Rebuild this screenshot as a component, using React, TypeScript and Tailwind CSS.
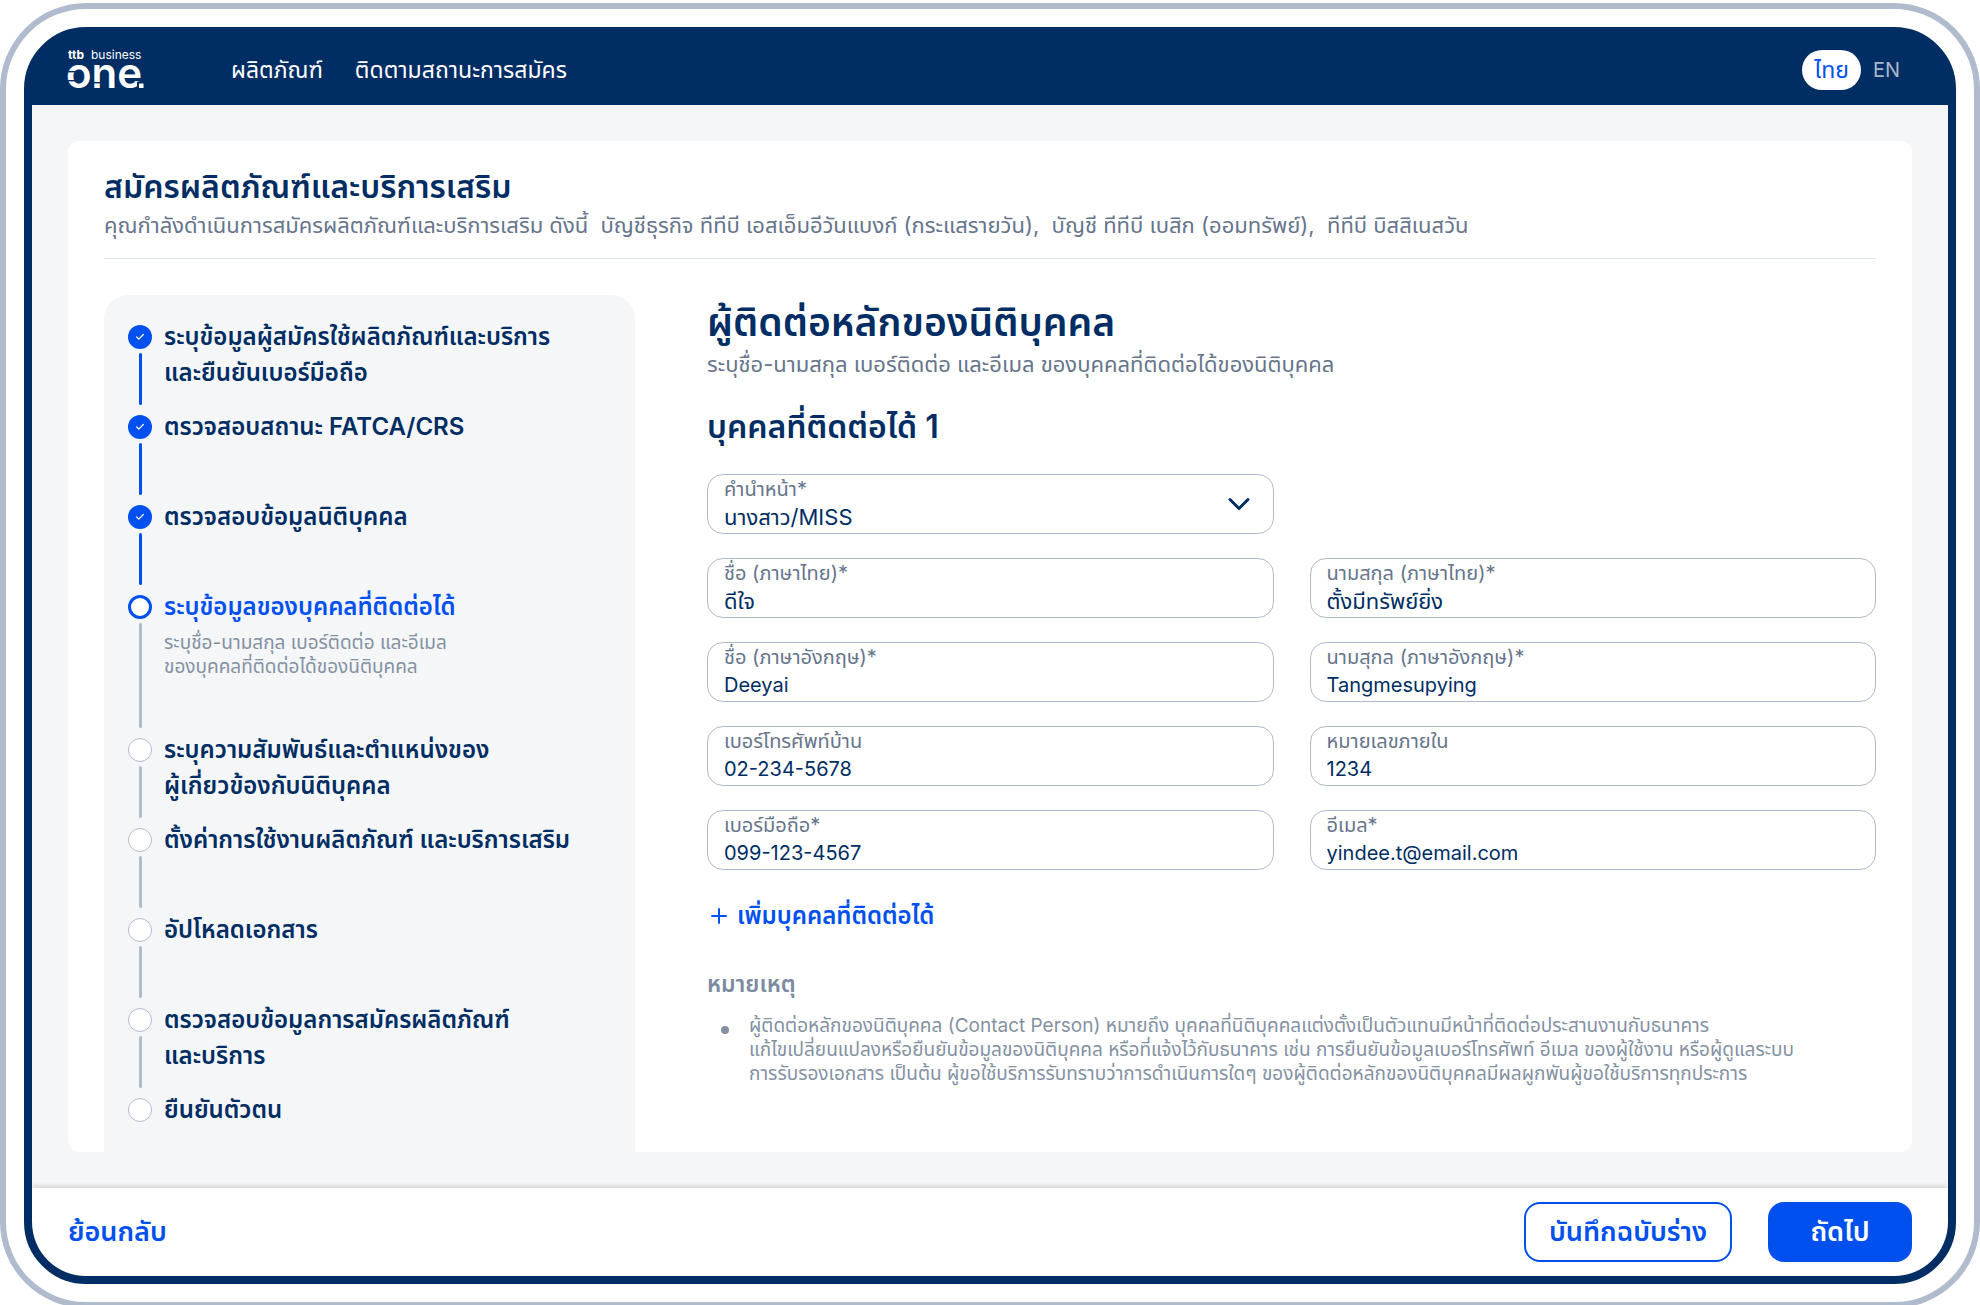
import { Check, ChevronDown, Plus } from 'lucide-react'

type StepState = 'done' | 'current' | 'todo'

type Step = {
  lines: string[]
  state: StepState
  desc?: string[]
}

const steps: Step[] = [
  { lines: ['ระบุข้อมูลผู้สมัครใช้ผลิตภัณฑ์และบริการ', 'และยืนยันเบอร์มือถือ'], state: 'done' },
  { lines: ['ตรวจสอบสถานะ FATCA/CRS'], state: 'done' },
  { lines: ['ตรวจสอบข้อมูลนิติบุคคล'], state: 'done' },
  {
    lines: ['ระบุข้อมูลของบุคคลที่ติดต่อได้'],
    state: 'current',
    desc: ['ระบุชื่อ-นามสกุล เบอร์ติดต่อ และอีเมล', 'ของบุคคลที่ติดต่อได้ของนิติบุคคล'],
  },
  { lines: ['ระบุความสัมพันธ์และตำแหน่งของ', 'ผู้เกี่ยวข้องกับนิติบุคคล'], state: 'todo' },
  { lines: ['ตั้งค่าการใช้งานผลิตภัณฑ์ และบริการเสริม'], state: 'todo' },
  { lines: ['อัปโหลดเอกสาร'], state: 'todo' },
  { lines: ['ตรวจสอบข้อมูลการสมัครผลิตภัณฑ์', 'และบริการ'], state: 'todo' },
  { lines: ['ยืนยันตัวตน'], state: 'todo' },
]

type FieldProps = { id: string; label: string; value: string; thai?: boolean }

const fields: FieldProps[] = [
  { id: 'firstNameTh', label: 'ชื่อ (ภาษาไทย)*', value: 'ดีใจ', thai: true },
  { id: 'lastNameTh', label: 'นามสกุล (ภาษาไทย)*', value: 'ตั้งมีทรัพย์ยิ่ง', thai: true },
  { id: 'firstNameEn', label: 'ชื่อ (ภาษาอังกฤษ)*', value: 'Deeyai' },
  { id: 'lastNameEn', label: 'นามสุกล (ภาษาอังกฤษ)*', value: 'Tangmesupying' },
  { id: 'homePhone', label: 'เบอร์โทรศัพท์บ้าน', value: '02-234-5678' },
  { id: 'ext', label: 'หมายเลขภายใน', value: '1234' },
  { id: 'mobile', label: 'เบอร์มือถือ*', value: '099-123-4567' },
  { id: 'email', label: 'อีเมล*', value: 'yindee.t@email.com' },
]

const notes = [
  'ผู้ติดต่อหลักของนิติบุคคล (Contact Person) หมายถึง บุคคลที่นิติบุคคลแต่งตั้งเป็นตัวแทนมีหน้าที่ติดต่อประสานงานกับธนาคาร',
  'แก้ไขเปลี่ยนแปลงหรือยืนยันข้อมูลของนิติบุคคล หรือที่แจ้งไว้กับธนาคาร เช่น การยืนยันข้อมูลเบอร์โทรศัพท์ อีเมล ของผู้ใช้งาน หรือผู้ดูแลระบบ',
  'การรับรองเอกสาร เป็นต้น ผู้ขอใช้บริการรับทราบว่าการดำเนินการใดๆ ของผู้ติดต่อหลักของนิติบุคคลมีผลผูกพันผู้ขอใช้บริการทุกประการ',
]

function Logo() {
  return (
    <svg width="80" height="42" viewBox="0 0 80 42" className="shrink-0 overflow-visible" role="img" aria-label="ttb business one">
      <g fill="#fff" fontFamily="Inter, sans-serif">
        <text x="0" y="10" fontSize="12" fontWeight="700">ttb</text>
        <text x="23" y="10" fontSize="12">business</text>
        <text x="-2" y="39" fontSize="42" fontWeight="600">one</text>
      </g>
      {/* cuts that split the strokes of the wordmark */}
      <g fill="#002d63">
        <rect x="-1" y="22" width="8" height="1.4" />
        <rect x="-1" y="31" width="8" height="1.4" />
        <rect x="25" y="33" width="8" height="1.4" />
        <rect x="69" y="33" width="10" height="7" />
      </g>
      <rect x="71" y="34.5" width="4.5" height="4.5" fill="#fff" />
    </svg>
  )
}

function Header() {
  return (
    <header className="flex h-[70px] shrink-0 items-center bg-[#002d63] px-9">
      <Logo />
      <nav className="ml-[83px] flex gap-8 text-[23px] text-white">
        <a href="#products">ผลิตภัณฑ์</a>
        <a href="#status">ติดตามสถานะการสมัคร</a>
      </nav>
      <div className="ml-auto flex items-center text-[20px]">
        <button type="button" className="h-10 rounded-full bg-white px-3 text-[23px] leading-10 text-[#0050f0]">ไทย</button>
        <button type="button" className="h-10 px-3 text-[#a9b7ca]">EN</button>
      </div>
    </header>
  )
}

function StepDot({ state }: { state: StepState }) {
  if (state === 'done') {
    return (
      <span className="flex size-6 items-center justify-center rounded-full bg-[#0050f0]">
        <Check size={10} strokeWidth={3} className="text-white" />
      </span>
    )
  }
  if (state === 'current') {
    return <span className="size-6 rounded-full border-3 border-[#0050f0] bg-white" />
  }
  return <span className="size-6 rounded-full border border-[#b0bccd] bg-white" />
}

function StepItem({ step, last }: { step: Step; last: boolean }) {
  const current = step.state === 'current'
  return (
    <li className={current ? 'flex min-h-[143px] gap-3' : 'flex min-h-[90px] gap-3'}>
      <div className="flex flex-col items-center pt-1.5">
        <StepDot state={step.state} />
        {!last && (
          <span
            className={
              step.state === 'done'
                ? 'my-1 w-[3px] flex-1 rounded-full bg-[#0050f0]'
                : 'my-1 w-[3px] flex-1 rounded-full bg-[#b0bccd]'
            }
          />
        )}
      </div>
      <div>
        {step.lines.map((line) => (
          <p
            key={line}
            className={
              current
                ? 'text-[24px] leading-9 font-semibold text-[#0050f0]'
                : 'text-[24px] leading-9 font-semibold text-[#002d63]'
            }
          >
            {line}
          </p>
        ))}
        {step.desc && (
          <div className="mt-1.5 text-[19px] leading-6 text-[#8491a3]">
            {step.desc.map((line) => (
              <p key={line}>{line}</p>
            ))}
          </div>
        )}
      </div>
    </li>
  )
}

function Field({ id, label, value, thai }: FieldProps) {
  return (
    <div className="flex h-[60px] flex-col rounded-2xl border border-[#b0bccd] px-4 pt-0.5">
      <label htmlFor={id} className="text-[20px] leading-6 text-[#66758c]">{label}</label>
      <input
        id={id}
        type="text"
        defaultValue={value}
        className={
          thai
            ? 'h-8 w-full bg-transparent text-[22px] leading-8 text-[#002d63] outline-none'
            : 'h-8 w-full bg-transparent text-[20px] leading-8 text-[#002d63] outline-none'
        }
      />
    </div>
  )
}

function TitleSelect() {
  return (
    <div className="relative flex h-[60px] flex-col rounded-2xl border border-[#b0bccd] px-4 pt-0.5">
      <label htmlFor="title" className="text-[20px] leading-6 text-[#66758c]">คำนำหน้า*</label>
      <select id="title" className="h-8 w-full appearance-none bg-transparent text-[22px] leading-8 text-[#002d63] outline-none">
        <option>นางสาว/MISS</option>
        <option>นาย/MR</option>
        <option>นาง/MRS</option>
      </select>
      <ChevronDown size={36} strokeWidth={2} className="pointer-events-none absolute top-[11px] right-4 text-[#002d63]" />
    </div>
  )
}

function ContactForm() {
  return (
    <form className="flex-1">
      <h2 className="text-[39px] leading-[54px] font-semibold text-[#002d63]">ผู้ติดต่อหลักของนิติบุคคล</h2>
      <p className="text-[22px] leading-[30px] text-[#66758c]">
        ระบุชื่อ-นามสกุล เบอร์ติดต่อ และอีเมล ของบุคคลที่ติดต่อได้ของนิติบุคคล
      </p>
      <h3 className="mt-7 text-[32px] leading-10 font-semibold text-[#002d63]">บุคคลที่ติดต่อได้ 1</h3>

      <div className="mt-[27px] grid grid-cols-2 gap-x-9 gap-y-6">
        <TitleSelect />
        <div />
        {fields.map((f) => (
          <Field key={f.id} {...f} />
        ))}
      </div>

      <button type="button" className="mt-7 flex items-center gap-1.5 text-[24px] leading-9 font-semibold text-[#0050f0]">
        <Plus size={24} strokeWidth={2} />
        เพิ่มบุคคลที่ติดต่อได้
      </button>

      <h4 className="mt-8 text-[23px] leading-9 font-semibold text-[#7d8ba0]">หมายเหตุ</h4>
      <ul className="mt-3 text-[19px] leading-6 text-[#8491a3]">
        <li className="flex gap-5 pl-3.5">
          <span className="mt-3 size-2 shrink-0 rounded-full bg-[#8491a3]" />
          <div>
            {notes.map((line) => (
              <p key={line}>{line}</p>
            ))}
          </div>
        </li>
      </ul>
    </form>
  )
}

function Footer() {
  return (
    <footer className="z-10 flex shrink-0 items-center gap-9 bg-white px-9 py-[14px] text-[27px] font-semibold shadow-[0_-2px_5px_rgba(0,0,0,0.15)]">
      <button type="button" className="mr-auto text-[#0050f0]">ย้อนกลับ</button>
      <button type="button" className="h-[60px] w-52 rounded-2xl border-2 border-[#0050f0] text-[#0050f0]">บันทึกฉบับร่าง</button>
      <button type="button" className="h-[60px] w-36 rounded-2xl bg-[#0050f0] text-white">ถัดไป</button>
    </footer>
  )
}

export default function App() {
  return (
    <div className="h-screen overflow-hidden bg-white pt-[3px] font-['Inter','Noto_Sans_Thai',sans-serif]">
      <div className="h-screen rounded-[86px] border-6 border-[#b0bccd] p-[18px]">
        <div className="flex h-full flex-col overflow-hidden rounded-[62px] border-8 border-[#002d63] bg-[#002d63]">
          <Header />
          <main className="flex min-h-0 flex-1 bg-[#f4f6f8] p-9">
            <section className="flex flex-1 flex-col rounded-xl bg-white px-9 pt-[26px]">
              <div className="border-b border-[#dde5ee] pb-[15px]">
                <h1 className="text-[32px] leading-10 font-semibold text-[#002d63]">สมัครผลิตภัณฑ์และบริการเสริม</h1>
                <p className="text-[22px] leading-9 whitespace-pre text-[#66758c]">
                  {'คุณกำลังดำเนินการสมัครผลิตภัณฑ์และบริการเสริม ดังนี้  บัญชีธุรกิจ ทีทีบี เอสเอ็มอีวันแบงก์ (กระแสรายวัน),  บัญชี ทีทีบี เบสิก (ออมทรัพย์),  ทีทีบี บิสสิเนสวัน'}
                </p>
              </div>
              <div className="mt-9 flex min-h-0 flex-1 gap-[72px]">
                <ol className="w-[531px] shrink-0 overflow-hidden rounded-t-3xl bg-[#f4f6f8] px-6 pt-6">
                  {steps.map((step, i) => (
                    <StepItem key={step.lines[0]} step={step} last={i === steps.length - 1} />
                  ))}
                </ol>
                <ContactForm />
              </div>
            </section>
          </main>
          <Footer />
        </div>
      </div>
    </div>
  )
}
